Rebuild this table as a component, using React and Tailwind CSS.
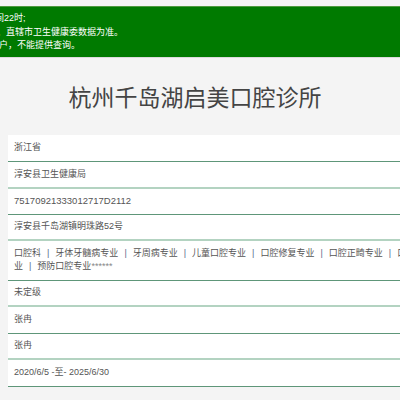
import React from 'react';

const rows = [
  { text: '浙江省', cls: 'h-[27px] border-b border-[#5e9679]' },
  { text: '淳安县卫生健康局', cls: 'h-[27px] border-b-2 border-[#b3d3c1]' },
  { text: '75170921333012717D2112', cls: 'h-[26px] border-b border-[#5e9679] text-[9.5px]' },
  { text: '淳安县千岛湖镇明珠路52号', cls: 'h-[26px] border-b-2 border-[#b3d3c1]' },
  { text: 'scope', cls: 'h-[40px] border-b border-[#5e9679]' },
  { text: '未定级', cls: 'h-[26px] border-b-2 border-[#b3d3c1]' },
  { text: '张冉', cls: 'h-[27px] border-b border-[#5e9679]' },
  { text: '张冉', cls: 'h-[26px] border-b-2 border-[#b3d3c1]' },
  { text: '2020/6/5 -至- 2025/6/30', cls: 'h-[27px] border-b border-[#5e9679]' },
];

const scopes = ['口腔科', '牙体牙髓病专业', '牙周病专业', '儿童口腔专业', '口腔修复专业', '口腔正畸专业'];

const Sep = () => <span className="mx-[6px] text-[#5b6b8c]">|</span>;

const App = () => {
  return (
    <div
      className="w-[400px] h-[400px] overflow-hidden bg-[#f4f4f4] pt-[6px]"
      style={{ fontFamily: '"Liberation Sans", "Noto Sans CJK SC", sans-serif' }}
    >
      <div className="h-[52px] border-t border-b border-t-[#4f9a3f] border-b-[#dcdcdc] bg-[#007a00] overflow-hidden pt-[5px] text-[9px] leading-[13.5px] text-white whitespace-nowrap">
        <div className="ml-[-14px]">时间22时;</div>
        <div className="ml-[-30px]">自治区、直辖市卫生健康委数据为准。</div>
        <div className="ml-[-10px]">用户，不能提供查询。</div>
      </div>

      <div className="w-[390px] pt-[25px] pb-[22px] text-center text-[23px] leading-[30px] text-[#444]">
        杭州千岛湖启美口腔诊所
      </div>

      <div className="ml-[8px] w-[440px] bg-white text-[9px] text-[#555]">
        {rows.map((row, i) =>
          row.text === 'scope' ? (
            <div key={i} className={`box-border pl-[6px] pt-[6px] leading-[13px] whitespace-nowrap ${row.cls}`}>
              <div>
                {scopes.map((s, j) => (
                  <React.Fragment key={j}>
                    {j > 0 && <Sep />}
                    {s}
                  </React.Fragment>
                ))}
                <Sep />
                口腔颌面外科专
              </div>
              <div>
                业<Sep />预防口腔专业<span className="text-[#888]">******</span>
              </div>
            </div>
          ) : (
            <div key={i} className={`box-border flex items-center pl-[6px] ${row.cls}`}>
              {row.text}
            </div>
          )
        )}
      </div>
    </div>
  );
};

export default App;
